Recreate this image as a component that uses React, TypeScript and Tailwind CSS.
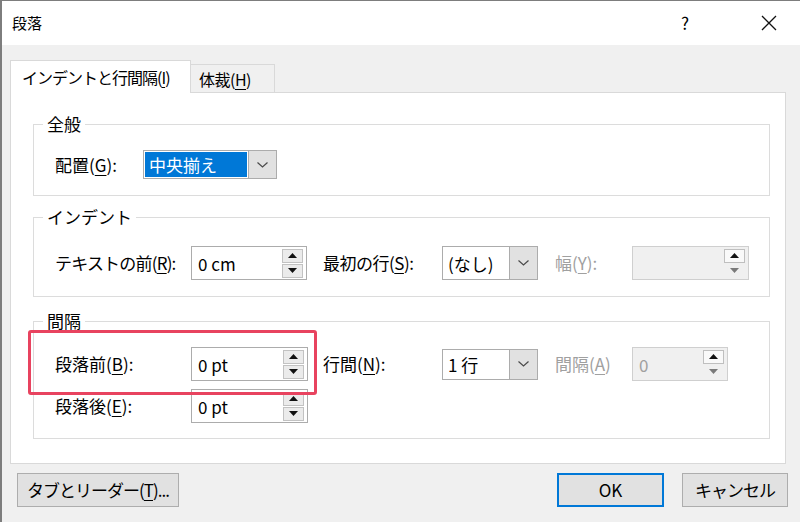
import React from "react";

const font = "font-['Noto_Sans_CJK_JP','Noto_Sans',sans-serif]";

function Key({ k }: { k: string }) {
    return <span className="underline underline-offset-[3px] decoration-1">{k}</span>;
}

function Arrow({ up, color }: { up?: boolean; color: string }) {
    return (
        <svg width="9" height="5" viewBox="0 0 9 5">
            <path d={up ? "M0 5 L4.5 0 L9 5 Z" : "M0 0 L4.5 5 L9 0 Z"} fill={color} />
        </svg>
    );
}

function Spin({ value, width, disabled }: { value: string; width: string; disabled?: boolean }) {
    return (
        <div
            className={`${width} h-[34px] flex items-center border ${
                disabled ? "bg-[#f0f0f0] border-[#cfcfcf] text-[#a0a0a0]" : "bg-white border-[#acacac]"
            }`}
        >
            <span className="flex-1 pl-[6px] text-[17px] leading-none">{value}</span>
            <div className="flex flex-col w-[21px] mr-[3px] gap-[1px]">
                <div
                    className={`h-[14px] flex items-center justify-center border ${
                        disabled ? "bg-[#f9f9f9] border-[#bfbfbf]" : "bg-[#ebebeb] border-[#c2c2c2]"
                    }`}
                >
                    <Arrow up color="#111" />
                </div>
                <div
                    className={`h-[14px] flex items-center justify-center border ${
                        disabled ? "bg-[#f0f0f0] border-transparent" : "bg-[#ebebeb] border-[#c2c2c2]"
                    }`}
                >
                    <Arrow color={disabled ? "#7a7a7a" : "#111"} />
                </div>
            </div>
        </div>
    );
}

function Combo({ value, width, height, selected }: { value: string; width: string; height: string; selected?: boolean }) {
    return (
        <div className={`${width} ${height} flex border border-[#acacac] bg-white`}>
            <div className="flex-1 flex p-[1px]">
                <span
                    className={`flex-1 flex items-center pl-[4px] text-[17px] leading-none ${
                        selected ? "bg-[#0078d7] text-white" : ""
                    }`}
                >
                    {value}
                </span>
            </div>
            <div className="w-[28px] bg-[#e1e1e1] border-l border-[#acacac] flex items-center justify-center">
                <svg width="11" height="6" viewBox="0 0 11 6">
                    <path d="M0.5 0.5 L5.5 5 L10.5 0.5" fill="none" stroke="#4a4a4a" strokeWidth="1.2" />
                </svg>
            </div>
        </div>
    );
}

function Group({ title, className, children }: { title: string; className: string; children: React.ReactNode }) {
    return (
        <fieldset className={`border border-[#dcdcdc] ml-[22px] mr-[15px] pl-[21px] ${className}`}>
            <legend className="-ml-[12px] px-[4px] text-[17px] leading-[20px]">{title}</legend>
            {children}
        </fieldset>
    );
}

export default function App() {
    return (
        <div className={`w-[800px] h-[522px] bg-[#f0f0f0] border-l-2 border-t border-[#7d7d7d] flex flex-col text-black ${font}`}>
            <div className="h-[44px] bg-white flex items-center pl-[10px] pr-[23px]">
                <span className="text-[15px] flex-1">段落</span>
                <span className="text-[17px] mr-[72px]">?</span>
                <svg width="16" height="16" viewBox="0 0 16 16">
                    <path d="M1 1 L15 15 M15 1 L1 15" stroke="#111" strokeWidth="1.3" />
                </svg>
            </div>

            <div className="flex-1 flex flex-col pl-[8px] pt-[15px]">
                <div className="flex items-end h-[32px] text-[16px]">
                    <div className="relative z-10 -mb-px h-[33px] w-[181px] bg-white border border-b-0 border-[#d9d9d9] flex items-center pl-[11px] tracking-[-1px]">
                        インデントと行間隔(<Key k="I" />)
                    </div>
                    <div className="h-[28px] w-[84px] bg-[#f0f0f0] border border-l-0 border-b-0 border-[#d9d9d9] flex items-center pl-[8px] tracking-[-0.5px]">
                        体裁(<Key k="H" />)
                    </div>
                </div>

                <div className="relative w-[776px] h-[372px] bg-white border border-[#d9d9d9] pt-[21px] text-[17px]">
                    <Group title="全般" className="pb-[16px]">
                        <div className="flex items-center mt-[16px]">
                            <span className="w-[88px]">
                                配置(<Key k="G" />):
                            </span>
                            <Combo value="中央揃え" width="w-[134px]" height="h-[29px]" selected />
                        </div>
                    </Group>

                    <Group title="インデント" className="mt-[11px] pb-[16px]">
                        <div className="flex items-center mt-[19px]">
                            <span className="w-[136px] tracking-[-0.8px]">
                                テキストの前(<Key k="R" />):
                            </span>
                            <Spin value="0 cm" width="w-[116px]" />
                            <span className="ml-[16px] w-[119px] tracking-[-0.5px]">
                                最初の行(<Key k="S" />):
                            </span>
                            <Combo value="(なし)" width="w-[96px]" height="h-[34px]" />
                            <span className="ml-[17px] w-[77px] text-[#a0a0a0]">
                                幅(<Key k="Y" />):
                            </span>
                            <Spin value="" width="w-[117px]" disabled />
                        </div>
                    </Group>

                    <Group title="間隔" className="mt-[14px] pb-[15px]">
                        <div className="flex items-center mt-[16px]">
                            <span className="w-[136px]">
                                段落前(<Key k="B" />):
                            </span>
                            <Spin value="0 pt" width="w-[117px]" />
                            <span className="ml-[15px] w-[119px]">
                                行間(<Key k="N" />):
                            </span>
                            <Combo value="1 行" width="w-[96px]" height="h-[31px]" />
                            <span className="ml-[17px] w-[77px] text-[#a0a0a0]">
                                間隔(<Key k="A" />)
                            </span>
                            <Spin value="0" width="w-[96px]" disabled />
                        </div>
                        <div className="flex items-center mt-[8px]">
                            <span className="w-[136px]">
                                段落後(<Key k="E" />):
                            </span>
                            <Spin value="0 pt" width="w-[117px]" />
                        </div>
                    </Group>

                    <div className="absolute left-[17px] top-[237px] w-[289px] h-[65px] border-[3px] border-[#e8435f] rounded-[3px]" />
                </div>

                <div className="flex items-center mt-[9px] text-[17px]">
                    <button className="ml-[7px] w-[162px] h-[34px] bg-[#e1e1e1] border border-[#adadad] tracking-[-1px]">
                        タブとリーダー(<Key k="T" />)...
                    </button>
                    <button className="ml-[378px] w-[107px] h-[34px] bg-[#e1e1e1] border-2 border-[#0078d7]">OK</button>
                    <button className="ml-[18px] w-[106px] h-[34px] bg-[#e1e1e1] border border-[#adadad] tracking-[-1px]">
                        キャンセル
                    </button>
                </div>
            </div>
        </div>
    );
}
